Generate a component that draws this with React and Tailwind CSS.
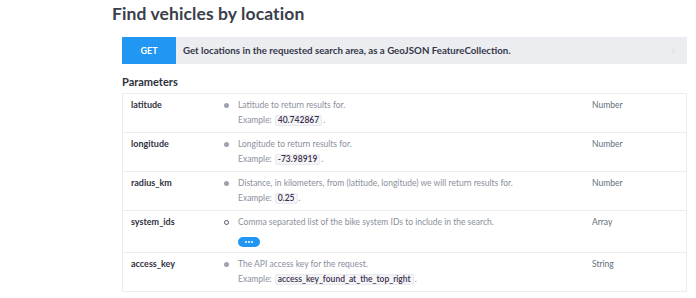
import React from 'react';
import { ChevronRight } from 'lucide-react';

const params = [
  { name: 'latitude', desc: 'Latitude to return results for.', example: '40.742867', type: 'Number' },
  { name: 'longitude', desc: 'Longitude to return results for.', example: '-73.98919', type: 'Number' },
  { name: 'radius_km', desc: 'Distance, in kilometers, from (latitude, longitude) we will return results for.', example: '0.25', type: 'Number' },
  { name: 'system_ids', desc: 'Comma separated list of the bike system IDs to include in the search.', optional: true, type: 'Array' },
  { name: 'access_key', desc: 'The API access key for the request.', example: 'access_key_found_at_the_top_right', type: 'String' },
];

const ParamRow = ({ p, last }) => (
  <div className={`flex pl-[8px] pt-[4px] ${p.optional ? 'pb-[5px]' : 'pb-[4px]'} ${last ? '' : 'border-b border-[#ececef]'}`}>
    <div className="w-[93px] h-[14px] leading-[14px] text-[9px] font-bold text-[#2f3340]">{p.name}</div>
    <div className="w-[5px] h-[14px] flex items-center">
      {p.optional ? (
        <span className="block w-[5px] h-[5px] rounded-full border border-[#55596a]" />
      ) : (
        <span className="block w-[5px] h-[5px] rounded-full bg-[#9ea2ae]" />
      )}
    </div>
    <div className="w-[354px] ml-[9px] text-[8.5px] text-[#8b909b]">
      <div className="h-[14px] leading-[14px]">{p.desc}</div>
      {p.optional ? (
        <div className="mt-[8px] w-[22px] h-[10px] rounded-full bg-[#2196f3] flex items-center justify-center gap-[1.5px]">
          <span className="w-[1.5px] h-[1.5px] rounded-full bg-white" />
          <span className="w-[1.5px] h-[1.5px] rounded-full bg-white" />
          <span className="w-[1.5px] h-[1.5px] rounded-full bg-white" />
        </div>
      ) : (
        <div className="h-[16px] flex items-center">
          <span>Example:</span>
          <span className="ml-[3px] h-[11px] px-[2px] flex items-center bg-[#f5f5f8] border border-[#e9e9ee] rounded-[2px] font-semibold text-[#3b2f4d]">
            {p.example}
          </span>
          <span className="ml-[1px]">.</span>
        </div>
      )}
    </div>
    <div className="h-[14px] leading-[14px] text-[8.5px] text-[#5f6f78]">{p.type}</div>
  </div>
);

export default function App() {
  return (
    <div className="w-[696px] h-[298px] bg-white overflow-hidden font-['Lato','Noto_Sans',sans-serif]">
      <h1 className="pl-[112px] pt-[3px] h-[37px] text-[17.5px] leading-[22px] font-bold text-[#3b3e4a] tracking-[0.1px]">
        Find vehicles by location
      </h1>
      <div className="ml-[122px] w-[565px]">
        <div className="h-[27px] flex items-center bg-[#ebedf0]">
          <div className="w-[54px] h-full bg-[#2196f3] flex items-center justify-center text-white text-[9px] font-bold">GET</div>
          <div className="ml-[7px] flex-1 text-[9.7px] font-bold text-[#34384a]">
            Get locations in the requested search area, as a GeoJSON FeatureCollection.
          </div>
          <ChevronRight className="w-[10px] h-[10px] mr-[9px] text-[#ccd0d5]" strokeWidth={1.25} />
        </div>
        <div className="pt-[12px] h-[29px] text-[11px] leading-[12px] font-bold text-[#2c2f3b]">Parameters</div>
        <div className="border border-[#ececef]">
          {params.map((p, i) => (
            <ParamRow key={p.name} p={p} last={i === params.length - 1} />
          ))}
        </div>
      </div>
    </div>
  );
}
